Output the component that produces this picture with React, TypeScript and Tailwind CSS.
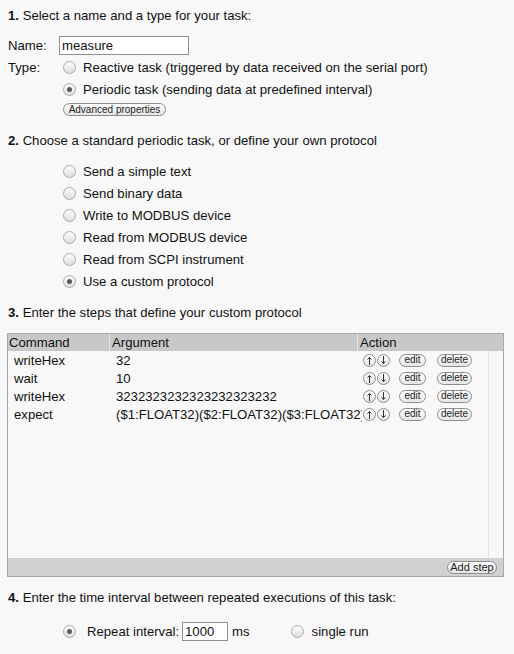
import React from "react";

function Radio({ checked = false }: { checked?: boolean }) {
  return (
    <span className="w-[13px] h-[13px] rounded-full border border-[#ababab] bg-linear-to-b from-[#fefefe] to-[#dedede] flex items-center justify-center shrink-0">
      {checked && <span className="w-[5px] h-[5px] rounded-full bg-[#5a5a5a]" />}
    </span>
  );
}

function Pill({ children, className = "" }: { children: React.ReactNode; className?: string }) {
  return (
    <span
      className={
        "inline-flex items-center justify-center h-[13px] rounded-full border border-[#8c8c8c] bg-linear-to-b from-white to-[#e6e6e6] text-[10px] leading-none text-[#222] shrink-0 " +
        className
      }
    >
      {children}
    </span>
  );
}

function Arrow({ up }: { up: boolean }) {
  return (
    <span className="w-[13px] h-[13px] rounded-full border border-[#8c8c8c] bg-linear-to-b from-white to-[#e6e6e6] flex items-center justify-center shrink-0">
      <svg width="7" height="9" viewBox="0 0 7 9" fill="none" stroke="#333" strokeWidth="1">
        {up ? (
          <path d="M3.5 1.5V9M1.5 3.5l2-2 2 2" />
        ) : (
          <path d="M3.5 0v7.5M1.5 5.5l2 2 2-2" />
        )}
      </svg>
    </span>
  );
}

function Heading({ num, text }: { num: string; text: string }) {
  return (
    <div className="h-[30px] flex items-center">
      <span className="font-bold">{num}</span>
      <span>&nbsp;{text}</span>
    </div>
  );
}

function Option({ label, checked = false }: { label: string; checked?: boolean }) {
  return (
    <div className="h-[22px] flex items-center pl-[55px]">
      <Radio checked={checked} />
      <span className="ml-[7px]">{label}</span>
    </div>
  );
}

const steps = [
  { cmd: "writeHex", arg: "32" },
  { cmd: "wait", arg: "10" },
  { cmd: "writeHex", arg: "3232323232323232323232" },
  { cmd: "expect", arg: "($1:FLOAT32)($2:FLOAT32)($3:FLOAT32)" },
];

export default function App() {
  return (
    <div className="min-h-screen bg-[#f8f8f8] text-[13.15px] leading-[15px] text-[#111] font-['Liberation_Sans',Arial,sans-serif] px-2">
      {/* 1. name and type */}
      <Heading num="1." text="Select a name and a type for your task:" />
      <div className="mt-[5px] h-[21px] flex items-center">
        <span className="w-[51px]">Name:</span>
        <div className="w-[130px] h-[19px] border border-[#8f8f8f] bg-white flex items-center pl-[2px]">
          measure
        </div>
      </div>
      <div className="h-[22px] flex items-center">
        <span className="w-[55px]">Type:</span>
        <Radio />
        <span className="ml-[7px]">Reactive task (triggered by data received on the serial port)</span>
      </div>
      <Option label="Periodic task (sending data at predefined interval)" checked />
      <div className="mt-[3px] pl-[55px] flex">
        <Pill className="w-[103px]">Advanced properties</Pill>
      </div>

      {/* 2. periodic task kind */}
      <div className="mt-[9px]">
        <Heading num="2." text="Choose a standard periodic task, or define your own protocol" />
      </div>
      <div className="mt-[5px]">
        <Option label="Send a simple text" />
        <Option label="Send binary data" />
        <Option label="Write to MODBUS device" />
        <Option label="Read from MODBUS device" />
        <Option label="Read from SCPI instrument" />
        <Option label="Use a custom protocol" checked />
      </div>

      {/* 3. custom protocol steps */}
      <div className="mt-[5px]">
        <Heading num="3." text="Enter the steps that define your custom protocol" />
      </div>
      <div className="mt-[6px] ml-[-1px] w-[497px] h-[244px] border border-[#a8a8a8] flex flex-col">
        <div className="h-[17px] bg-[#c8c8c8] flex items-center shrink-0">
          <div className="w-[101px] pl-[1px] h-full flex items-center">Command</div>
          <div className="w-[248px] pl-[2px] h-full flex items-center border-l border-[#e4e4e4]">Argument</div>
          <div className="flex-1 pl-[2px] h-full flex items-center border-l border-[#e4e4e4]">Action</div>
        </div>
        <div className="flex-1 flex">
          <div className="w-[480px]">
            {steps.map((s, i) => (
              <div key={i} className="h-[18px] flex items-center">
                <div className="w-[101px] pl-[6px]">{s.cmd}</div>
                <div className="w-[253px] pl-[7px] overflow-hidden whitespace-nowrap">{s.arg}</div>
                <div className="flex items-center pl-[1px]">
                  <Arrow up />
                  <span className="w-[1px]" />
                  <Arrow up={false} />
                  <Pill className="ml-[9px] w-[27px]">edit</Pill>
                  <Pill className="ml-[11px] w-[35px]">delete</Pill>
                </div>
              </div>
            ))}
          </div>
          <div className="flex-1 border-l border-[#e2e2e2]" />
        </div>
        <div className="h-[18px] bg-[#d0d0d0] flex items-center justify-end pr-[6px] shrink-0">
          <Pill className="w-[50px] text-[11px]">Add step</Pill>
        </div>
      </div>

      {/* 4. repeat interval */}
      <div className="mt-[5px]">
        <Heading num="4." text="Enter the time interval between repeated executions of this task:" />
      </div>
      <div className="mt-[8px] h-[22px] flex items-center pl-[55px]">
        <Radio checked />
        <span className="ml-[11px]">Repeat interval:</span>
        <div className="ml-[3px] w-[46px] h-[19px] border border-[#8f8f8f] bg-white flex items-center pl-[2px]">
          1000
        </div>
        <span className="ml-[4px]">ms</span>
        <span className="ml-[41px]">
          <Radio />
        </span>
        <span className="ml-[8px]">single run</span>
      </div>
    </div>
  );
}
